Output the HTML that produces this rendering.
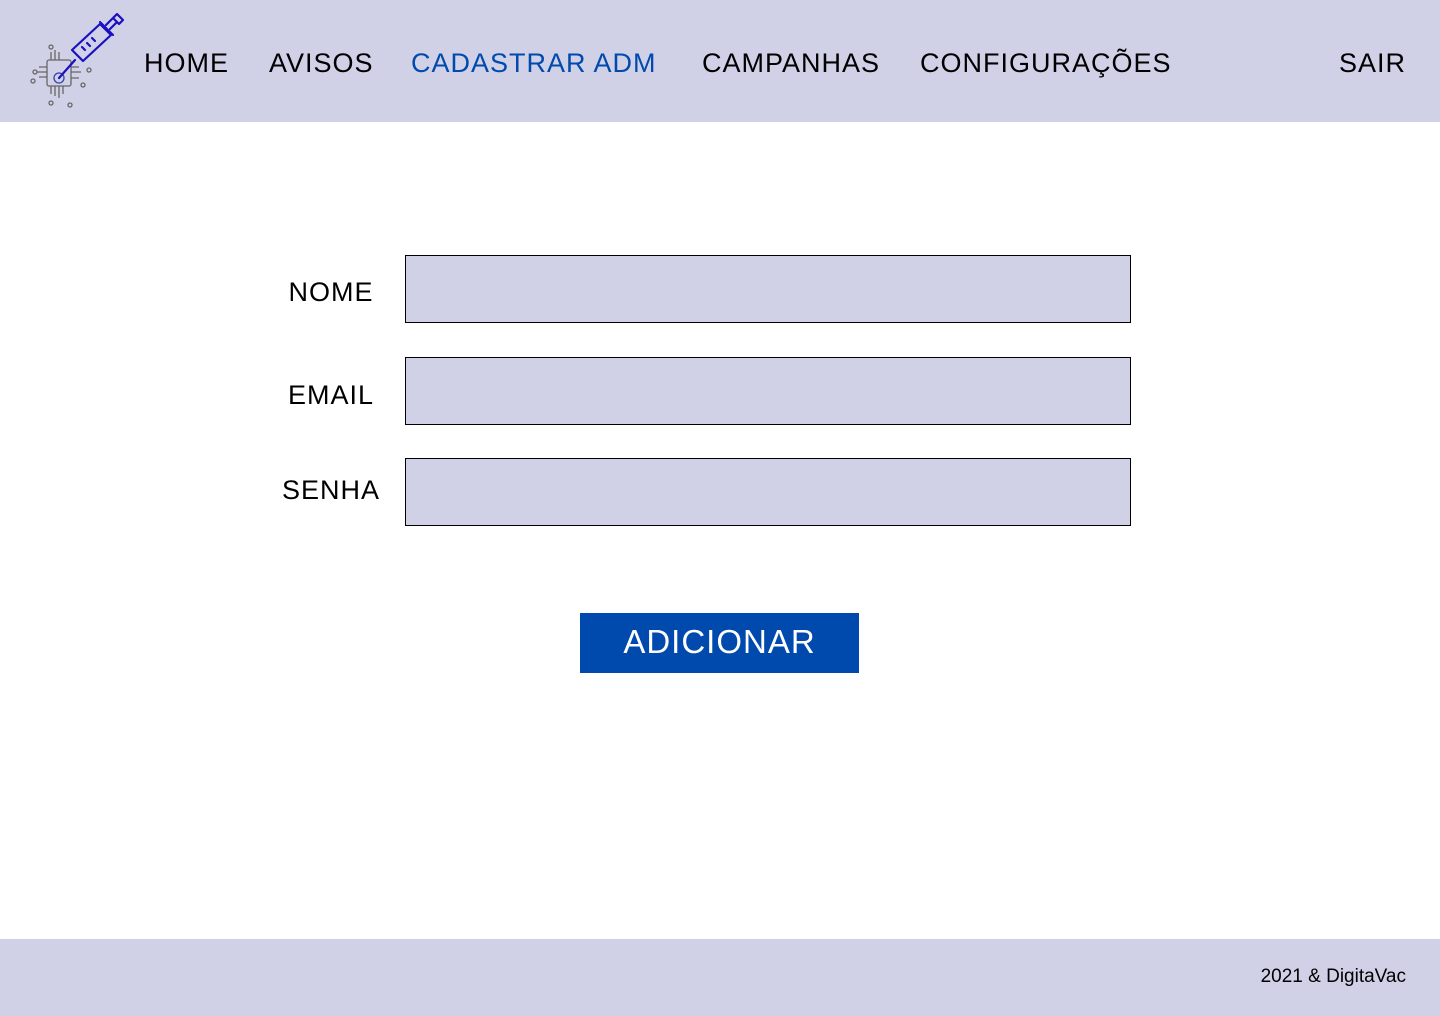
<!DOCTYPE html>
<html><head><meta charset="utf-8"><style>
body{margin:0;width:1440px;height:1016px;position:relative;background:#fff;font-family:"Liberation Sans",sans-serif;overflow:hidden}
.hdr{position:absolute;left:0;top:0;width:1440px;height:122px;background:#d0d0e7}
.n{position:absolute;top:46px;font-size:27px;line-height:34px;letter-spacing:1px;color:#000;white-space:nowrap}
.lbl{position:absolute;font-size:27px;color:#000;letter-spacing:1px;width:130px;text-align:center;left:266px}
.in{position:absolute;left:405px;width:724px;height:66px;background:#d0d0e7;border:1px solid #000}
.btn{position:absolute;left:580px;top:613px;width:279px;height:60px;background:#004aad;color:#fff;font-size:33px;letter-spacing:1px;text-align:center;line-height:58px}
.ftr{position:absolute;left:0;top:939px;width:1440px;height:77px;background:#d0d0e7}
</style></head><body>
<div class="hdr">
<svg style="position:absolute;left:20px;top:5px" width="115" height="110" viewBox="0 0 115 110" fill="none">
<g stroke="#666" stroke-width="1.3">
<rect x="27" y="55" width="24" height="26" rx="2"/>
<path d="M31 55v-8M35 55v-10M39 55v-8M31 81v8M35 81v10M39 81v12M43 81v8M27 62h-8M27 67h-10M27 72h-8M51 62h8M51 67h10M51 73h8"/>
<circle cx="31" cy="42" r="2"/><circle cx="15" cy="67" r="2"/><circle cx="13" cy="76" r="2"/><circle cx="63" cy="80" r="2"/><circle cx="69" cy="65" r="2"/><circle cx="50" cy="100" r="2"/><circle cx="31" cy="98" r="2"/>
</g>
<circle cx="39" cy="73" r="5" stroke="#3344aa" stroke-width="1.3"/>
<g stroke="#1a10c0" stroke-width="2.2" stroke-linecap="round" stroke-linejoin="round">
<path d="M39 73l16-18"/>
<path d="M52 45l28-26 11 11-28 26z"/>
<path d="M62 42l3 3M67 38l3 3M72 33l3 3"/>
<path d="M80 17l13 13M86 20l7-7M90 24l7-7M93 13l4-4 6 6-4 4z"/>
</g>
</svg>
<div class="n" style="left:144px">HOME</div>
<div class="n" style="left:269px">AVISOS</div>
<div class="n" style="left:411px;color:#004aad">CADASTRAR ADM</div>
<div class="n" style="left:702px">CAMPANHAS</div>
<div class="n" style="left:920px">CONFIGURAÇÕES</div>
<div class="n" style="left:1339px">SAIR</div>
</div>
<div class="lbl" style="top:277px">NOME</div>
<div class="in" style="top:255px"></div>
<div class="lbl" style="top:380px">EMAIL</div>
<div class="in" style="top:357px"></div>
<div class="lbl" style="top:475px">SENHA</div>
<div class="in" style="top:458px"></div>
<div class="btn">ADICIONAR</div>
<div class="ftr"><div style="position:absolute;right:34px;top:27px;font-size:19px;color:#000">2021 &amp; DigitaVac</div></div>
</body></html>
